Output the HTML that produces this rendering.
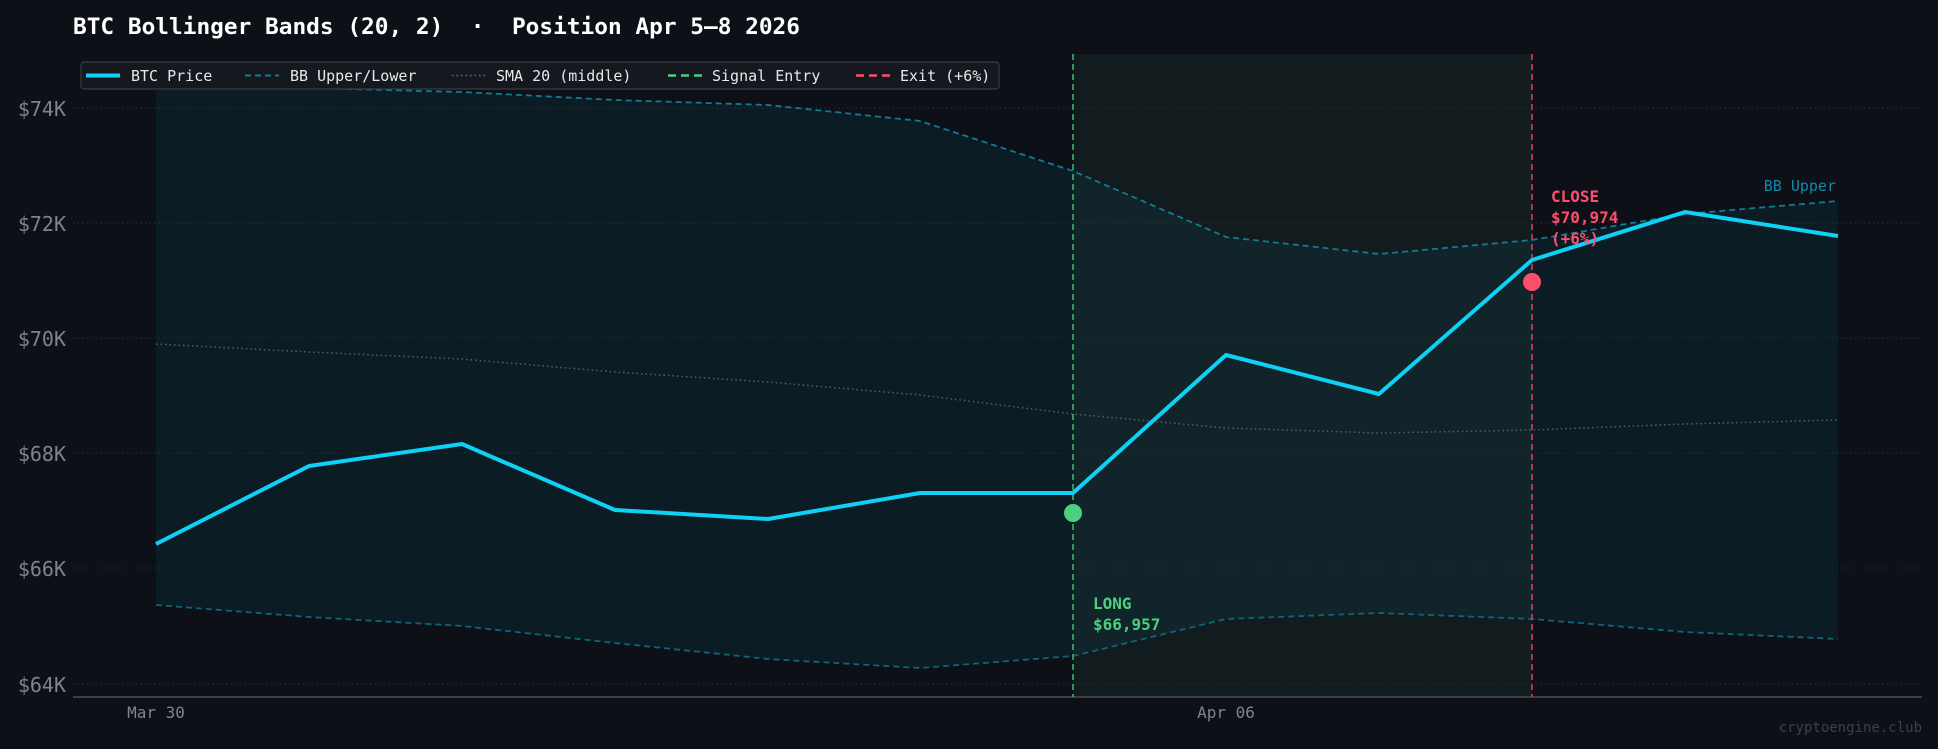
<!DOCTYPE html>
<html><head><meta charset="utf-8"><style>
html,body{margin:0;padding:0;background:#0d1017;}
svg{display:block;font-family:"DejaVu Sans Mono","Liberation Mono",monospace;}
text{white-space:pre;}
</style></head><body>
<svg width="1938" height="749" viewBox="0 0 1938 749" xmlns="http://www.w3.org/2000/svg" xml:space="preserve">
<rect width="1938" height="749" fill="#0d1017"/>
<text x="73" y="34" font-size="22" font-weight="bold" fill="#ffffff" textLength="727" lengthAdjust="spacingAndGlyphs">BTC Bollinger Bands (20, 2)  ·  Position Apr 5–8 2026</text>
<polygon fill="#0c1c24" points="156,84 309,88 462,92 615,100 768,105 920,121 1073,171 1226,237 1379,254 1532,240 1685,214 1838,201 1838,639 1685,632 1532,619 1379,613 1226,619 1073,656 920,668 768,659 615,643 462,626 309,617 156,605"/>
<rect x="1073" y="54" width="459" height="642" fill="#24463a" opacity="0.22"/>
<g stroke="#2a3030" stroke-width="1" stroke-dasharray="1.5,3">
<line x1="73" x2="1922" y1="108" y2="108"/><line x1="73" x2="1922" y1="223" y2="223"/>
<line x1="73" x2="1922" y1="338" y2="338"/><line x1="73" x2="1922" y1="453" y2="453"/>
<line x1="73" x2="1922" y1="568" y2="568"/><line x1="73" x2="1922" y1="684" y2="684"/>
</g>
<g font-size="20" fill="#7d8490" text-anchor="end">
<text x="66" y="116">$74K</text><text x="66" y="231">$72K</text><text x="66" y="346">$70K</text>
<text x="66" y="461">$68K</text><text x="66" y="576">$66K</text><text x="66" y="692">$64K</text>
</g>
<line x1="73" x2="1922" y1="697" y2="697" stroke="#3a3d42" stroke-width="2"/>
<g font-size="16" fill="#7d8490" text-anchor="middle"><text x="156" y="718">Mar 30</text><text x="1226" y="718">Apr 06</text></g>
<text x="1922" y="732" font-size="14" fill="#3c4048" text-anchor="end">cryptoengine.club</text>
<polyline fill="none" stroke="#5a5e62" stroke-width="1.5" stroke-dasharray="1.5,3" points="156,344 309,352 462,359 615,372 768,382 920,395 1073,414 1226,428 1379,433 1532,430 1685,424 1838,420"/>
<polyline fill="none" stroke="#127a92" stroke-width="1.8" stroke-dasharray="6,4" points="156,84 309,88 462,92 615,100 768,105 920,121 1073,171 1226,237 1379,254 1532,240 1685,214 1838,201"/>
<polyline fill="none" stroke="#0f6478" stroke-width="1.8" stroke-dasharray="6,4" points="156,605 309,617 462,626 615,643 768,659 920,668 1073,656 1226,619 1379,613 1532,619 1685,632 1838,639"/>
<line x1="1073" x2="1073" y1="54" y2="697" stroke="#3fbf72" stroke-width="1.5" stroke-dasharray="6,4"/>
<line x1="1532" x2="1532" y1="54" y2="697" stroke="#e0405e" stroke-width="1.5" stroke-dasharray="6,4"/>
<polyline fill="none" stroke="#0fd0f5" stroke-width="4" stroke-linejoin="round" points="156,544 309,466 462,444 615,510 768,519 920,493 1073,493 1226,355 1379,394 1532,260 1685,212 1838,236"/>
<circle cx="1073" cy="513" r="9" fill="#4ad07f"/>
<circle cx="1532" cy="282" r="9" fill="#ff4d6d"/>
<g font-size="16" font-weight="bold" fill="#4ad07f"><text x="1093" y="609">LONG</text><text x="1093" y="630">$66,957</text></g>
<g font-size="16" font-weight="bold" fill="#ff4d6d"><text x="1551" y="202">CLOSE</text><text x="1551" y="223">$70,974</text><text x="1551" y="244">(+6%)</text></g>
<text x="1836" y="191" font-size="15" fill="#0e8aa8" text-anchor="end">BB Upper</text>
<rect x="81" y="62" width="918" height="27" rx="3" fill="#15181e" stroke="#3a3d42" stroke-width="1.2"/>
<g font-size="15" fill="#e8e8e8">
<line x1="86" x2="120" y1="75.5" y2="75.5" stroke="#0fd0f5" stroke-width="4"/><text x="131" y="81">BTC Price</text>
<line x1="245" x2="279" y1="75.5" y2="75.5" stroke="#127a92" stroke-width="2" stroke-dasharray="6,4"/><text x="290" y="81">BB Upper/Lower</text>
<line x1="452" x2="486" y1="75.5" y2="75.5" stroke="#6a6e72" stroke-width="1.5" stroke-dasharray="1.5,3"/><text x="496" y="81">SMA 20 (middle)</text>
<line x1="668" x2="702" y1="75.5" y2="75.5" stroke="#4ad07f" stroke-width="2.5" stroke-dasharray="8,5"/><text x="712" y="81">Signal Entry</text>
<line x1="856" x2="890" y1="75.5" y2="75.5" stroke="#ff4d6d" stroke-width="2.5" stroke-dasharray="8,5"/><text x="900" y="81">Exit (+6%)</text>
</g>
</svg>
</body></html>
